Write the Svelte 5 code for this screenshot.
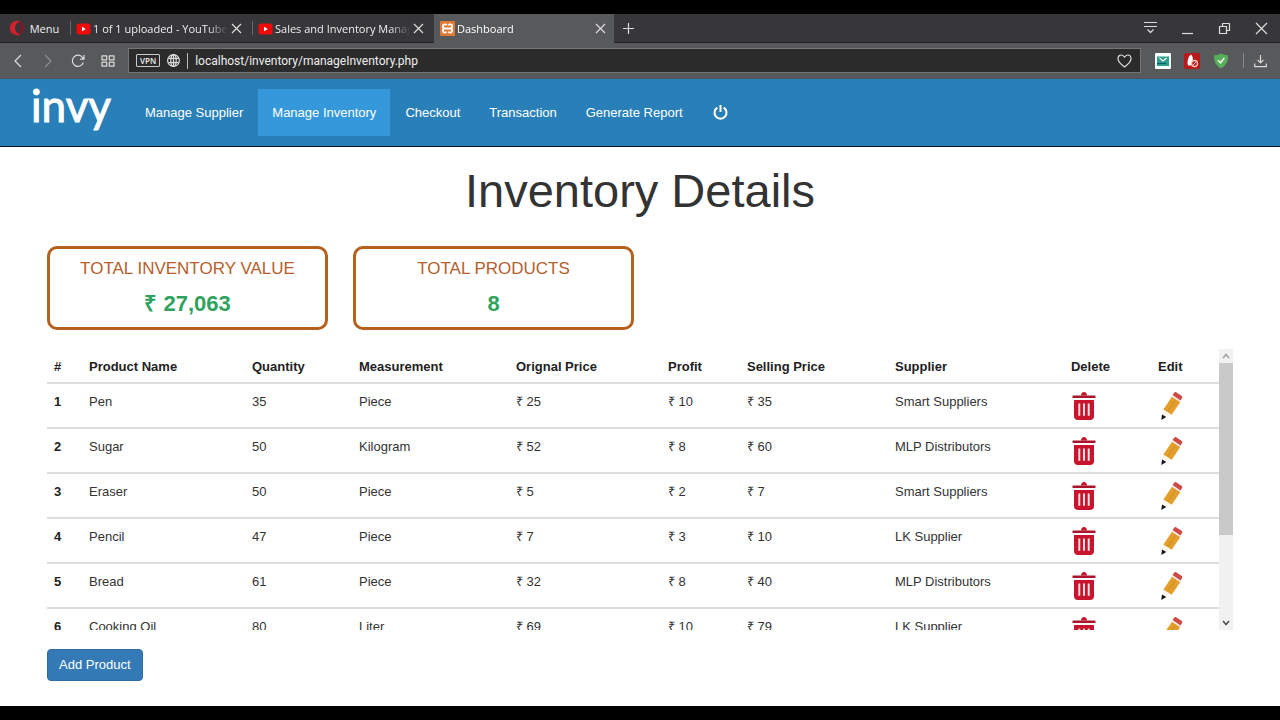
<script>
  const navLinks = ['Manage Supplier', 'Manage Inventory', 'Checkout', 'Transaction', 'Generate Report'];
  const activeLink = 'Manage Inventory';

  const tabs = [
    { title: '1 of 1 uploaded - YouTube Studio', icon: 'youtube' },
    { title: 'Sales and Inventory Management', icon: 'youtube' },
    { title: 'Dashboard', icon: 'xampp', active: true }
  ];

  const columns = [
    { label: '#', size: 35 },
    { label: 'Product Name', size: 163 },
    { label: 'Quantity', size: 107 },
    { label: 'Measurement', size: 157 },
    { label: 'Orignal Price', size: 152 },
    { label: 'Profit', size: 79 },
    { label: 'Selling Price', size: 148 },
    { label: 'Supplier', size: 176 },
    { label: 'Delete', size: 87 },
    { label: 'Edit', size: 68 }
  ];
  const totalSize = columns.reduce((sum, c) => sum + c.size, 0);

  const products = [
    ['Pen', 35, 'Piece', 25, 10, 35, 'Smart Suppliers'],
    ['Sugar', 50, 'Kilogram', 52, 8, 60, 'MLP Distributors'],
    ['Eraser', 50, 'Piece', 5, 2, 7, 'Smart Suppliers'],
    ['Pencil', 47, 'Piece', 7, 3, 10, 'LK Supplier'],
    ['Bread', 61, 'Piece', 32, 8, 40, 'MLP Distributors'],
    ['Cooking Oil', 80, 'Liter', 69, 10, 79, 'LK Supplier']
  ];

  let url = $state('localhost/inventory/manageInventory.php');
</script>

<div class="screen">
  <header class="browser">
    <div class="tabbar">
      <button class="menu">
        <svg width="16" height="16" viewBox="0 0 16 16" aria-hidden="true">
          <path fill="#d3202f" d="M8 .8A7.2 7.2 0 1 0 8 15.200c1.700 0 3.200-.6 4.400-1.500-3.400 1-6.300-1.600-6.300-5.700s2.900-6.700 6.300-5.700A7.200 7.200 0 0 0 8 .8z" />
          <path fill="#7c1a28" d="M12.400 2.300c-1.200-.5-2.300-.4-3.400.3 1.600.6 2.600 2.800 2.600 5.400s-1 4.800-2.600 5.400c1.100.7 2.200.8 3.400.3A7.200 7.200 0 0 0 12.400 2.300z" />
        </svg>
        <span>Menu</span>
      </button>
      {#each tabs as tab}
        <div class="tab" class:active={tab.active}>
          {#if tab.icon === 'youtube'}
            <svg width="15" height="12" viewBox="0 0 15 12" aria-hidden="true">
              <rect x=".5" y=".5" width="14" height="11" rx="2.500" fill="#f00a0a" />
              <path d="M6 3.700v4.600L9.800 6z" fill="#fff" />
            </svg>
          {:else}
            <svg width="15" height="15" viewBox="0 0 16 16" aria-hidden="true">
              <rect width="16" height="16" rx="1" fill="#e07a35" />
              <path d="M7 4.600C6.400 3.200 3 3.200 3 5.600 3 7.300 4.200 8 5.500 8h5C11.800 8 13 7.300 13 5.600c0-2.400-3.400-2.400-4-1M5.500 8C4.200 8 3 8.700 3 10.400c0 2.400 3.400 2.400 4 1M10.500 8c1.300 0 2.500.7 2.500 2.400 0 2.400-3.400 2.400-4 1" fill="none" stroke="#fff" stroke-width="1.900" />
            </svg>
          {/if}
          <span class="tab-title">{tab.title}</span>
          <button class="close" aria-label="Close tab">
            <svg width="11" height="11" viewBox="0 0 11 11"><path d="M1 1l9 9M10 1l-9 9" /></svg>
          </button>
        </div>
      {/each}
      <button class="new-tab" aria-label="New tab">
        <svg width="11" height="11" viewBox="0 0 11 11"><path d="M5.500 0v11M0 5.500h11" /></svg>
      </button>
      <div class="window-controls">
        <button aria-label="Tab menu">
          <svg width="15" height="14" viewBox="0 0 15 14"><path d="M1 1.500h13M1 5.500h13M4.500 8.500l3 3 3-3" /></svg>
        </button>
        <button aria-label="Minimize">
          <svg width="13" height="14" viewBox="0 0 13 14"><path d="M1 12.500h11" /></svg>
        </button>
        <button aria-label="Restore">
          <svg width="13" height="13" viewBox="0 0 13 13"><path d="M1.500 4.500h7v7h-7zM4.500 4.500v-3h7v7h-3" /></svg>
        </button>
        <button aria-label="Close window">
          <svg width="13" height="13" viewBox="0 0 13 13"><path d="M1 1l11 11M12 1L1 12" /></svg>
        </button>
      </div>
    </div>

    <div class="toolbar">
      <button class="tool" aria-label="Back">
        <svg width="14" height="14" viewBox="0 0 14 14"><path d="M10 1L4 7l6 6" /></svg>
      </button>
      <button class="tool dim" aria-label="Forward">
        <svg width="14" height="14" viewBox="0 0 14 14"><path d="M4 1l6 6-6 6" /></svg>
      </button>
      <button class="tool" aria-label="Reload">
        <svg width="14" height="14" viewBox="0 0 14 14"><path d="M12.300 8.500A5.600 5.600 0 1 1 11.500 3.500L12.800 5M13 1v4.200H9" /></svg>
      </button>
      <button class="tool" aria-label="Speed dial">
        <svg width="14" height="12" viewBox="0 0 14 12"><path d="M1 .8h4.700v4H1zM8.300.8H13v4H8.300zM1 7.200h4.700v4H1zM8.300 7.200H13v4H8.300z" /></svg>
      </button>
      <div class="address">
        <span class="vpn">VPN</span>
        <svg width="13" height="13" viewBox="0 0 13 13" aria-hidden="true"><circle cx="6.500" cy="6.500" r="5.900" /><ellipse cx="6.500" cy="6.500" rx="2.700" ry="5.900" /><path d="M1.300 4.300h10.400M1.300 8.700h10.400M6.500.6v11.800" /></svg>
        <i class="caret"></i>
        <input aria-label="Address" bind:value={url} spellcheck="false" />
        <button aria-label="Bookmark">
          <svg width="15" height="14" viewBox="0 0 15 14"><path d="M7.500 13C4 10.300 1 7.800 1 4.700 1 2.500 2.500 1 4.300 1c1.400 0 2.500.8 3.200 2.200C8.200 1.800 9.300 1 10.700 1 12.500 1 14 2.500 14 4.700c0 3.100-3 5.600-6.500 8.300z" /></svg>
        </button>
      </div>
      <div class="extensions">
        <button aria-label="Mail">
          <svg class="solid" width="16" height="16" viewBox="0 0 16 16"><rect width="16" height="16" rx="1" fill="#f4fffc" /><rect x="2" y="3.500" width="12" height="9.500" fill="#2f9e8c" /><path d="M4.500 5L8 8l3.500-3" fill="none" stroke="#fff" stroke-width="1.300" /><path d="M2 10.500h9" stroke="#0b5c66" stroke-width="1.200" /></svg>
        </button>
        <button aria-label="Blocker">
          <svg class="solid" width="16" height="16" viewBox="0 0 16 16"><rect width="16" height="16" rx="2" fill="#b81a1c" /><path d="M4 12.500C2.800 9 4 3.500 7 1.500c2.300 2 2 5 1.600 7L7 12.500z" fill="#fff" /><circle cx="10.500" cy="10.500" r="3" fill="#b81a1c" stroke="#ffc5b8" stroke-width="1.300" /><path d="M8.500 12.500l4-4" stroke="#ffc5b8" /></svg>
        </button>
        <button aria-label="Shield">
          <svg class="solid" width="16" height="16" viewBox="0 0 16 16"><path d="M8 .5c2.200 1.300 4.500 1.700 7 1.700 0 6-1.500 10.300-7 13.300C2.500 12.500 1 8.200 1 2.200c2.500 0 4.800-.4 7-1.700z" fill="#56ae5b" /><path d="M5 7.200l2.500 2.600L11.300 5" fill="none" stroke="#f2fff0" stroke-width="1.500" /></svg>
        </button>
      </div>
      <i class="divider"></i>
      <button class="download" aria-label="Downloads">
        <svg width="13" height="14" viewBox="0 0 13 14"><path d="M6.500 1v7.500M3.500 5.800l3 3 3-3M.7 9.500v3.200h11.600V9.500" /></svg>
      </button>
    </div>
  </header>

  <nav class="navbar">
    <a class="brand" href="#home">invy</a>
    {#each navLinks as link}
      <a class="link" class:active={link === activeLink} href="#{link.toLowerCase().replace(' ', '-')}">{link}</a>
    {/each}
    <a class="link power" href="#logout" aria-label="Log out">
      <svg width="17" height="17" viewBox="0 0 17 17"><path d="M5.300 3.600a6 6 0 1 0 6.400 0M8.500 1v7" /></svg>
    </a>
  </nav>

  <main>
    <h1>Inventory Details</h1>

    <section class="cards">
      <div class="card">
        <h2>TOTAL INVENTORY VALUE</h2>
        <strong>₹ 27,063</strong>
      </div>
      <div class="card">
        <h2>TOTAL PRODUCTS</h2>
        <strong>8</strong>
      </div>
    </section>

    <section class="list">
      <div class="scroll">
        <table>
          <colgroup>
            {#each columns as col}
              <col style="width: {(col.size / totalSize) * 100}%" />
            {/each}
          </colgroup>
          <thead>
            <tr>
              {#each columns as col}<th scope="col">{col.label}</th>{/each}
            </tr>
          </thead>
          <tbody>
            {#each products as [name, qty, unit, cost, profit, price, supplier], i}
              <tr>
                <th scope="row">{i + 1}</th>
                <td>{name}</td>
                <td>{qty}</td>
                <td>{unit}</td>
                <td>₹ {cost}</td>
                <td>₹ {profit}</td>
                <td>₹ {price}</td>
                <td>{supplier}</td>
                <td>
                  <button class="icon" aria-label="Delete {name}">
                    <svg width="26" height="30" viewBox="0 0 26 30">
                      <path fill="#c8142c" d="M3 9h20v16a4 4 0 0 1-4 4H7a4 4 0 0 1-4-4zM10 4.500C10 2.300 11.300 1 13 1s3 1.300 3 3.500z" />
                      <rect x="1.500" y="4.500" width="23" height="2.600" rx=".6" fill="#ab142c" />
                      <path stroke="#fbe6e8" stroke-width="1.900" d="M8.300 12.500v12.300M13 12.500v12.300M17.700 12.500v12.300" />
                    </svg>
                  </button>
                </td>
                <td>
                  <button class="icon" aria-label="Edit {name}">
                    <svg width="26" height="30" viewBox="0 0 26 30">
                      <path fill="#fdf6ea" d="M5 18.800l7.800 5.200-9 4.800z" />
                      <path fill="#e39e2b" d="M14 5.800l8.300 5.300-8.600 12.600-8.300-5.300z" />
                      <path stroke="#d99626" stroke-width="1.800" fill="none" d="M17.600 8.900L9.800 20.600" />
                      <path fill="#f8e1dc" d="M14.600 4.800l8.300 5.400-.6 1-8.300-5.400z" />
                      <path fill="#cf4a45" d="M16 1.900c.7-1 1.600-1.100 2.500-.5l5 3.400c.9.600 1 1.400.4 2.400l-1.400 2.200-8-5.300z" />
                      <path fill="#15151f" d="M4 23.400l4.300 2.600-5 3z" />
                    </svg>
                  </button>
                </td>
              </tr>
            {/each}
          </tbody>
        </table>
      </div>
      <div class="scrollbar">
        <button class="up" aria-label="Scroll up">
          <svg width="8" height="6" viewBox="0 0 8 6"><path d="M1 5l3-3.500L7 5" /></svg>
        </button>
        <div class="track"><div class="thumb"></div></div>
        <button class="down" aria-label="Scroll down">
          <svg width="8" height="6" viewBox="0 0 8 6"><path d="M1 1l3 3.500L7 1" /></svg>
        </button>
      </div>
    </section>

    <button class="add">Add Product</button>
  </main>
</div>

<style>
  :global(body) {
    background: #000;
  }

  .screen {
    box-sizing: border-box;
    height: 100vh;
    padding: 14px 0;
    display: flex;
    flex-direction: column;
    background: #000;
    font-family: "Liberation Sans", Arial, sans-serif;
    font-size: 13px;
    line-height: 19px;
    color: #333;
  }

  button {
    display: flex;
    align-items: center;
    justify-content: center;
    padding: 0;
    border: 0;
    background: none;
    color: inherit;
    font: inherit;
    cursor: pointer;
  }

  svg {
    flex: none;
    display: block;
  }

  .browser {
    font-family: "Open Sans", "Segoe UI", sans-serif;
    font-size: 11px;
    color: #eee;
  }

  .close svg,
  .new-tab svg,
  .window-controls svg,
  .tool svg,
  .address svg,
  .download svg {
    fill: none;
    stroke: #dcdcdc;
    stroke-width: 1.2;
    stroke-linejoin: round;
  }

  .tabbar {
    box-sizing: border-box;
    display: flex;
    height: 29px;
    background: #37373a;
    border-bottom: 1px solid #202022;
  }

  .menu {
    width: 68px;
    margin-right: 2px;
    gap: 5px;
  }

  .tab {
    box-sizing: border-box;
    display: flex;
    align-items: center;
    width: 182px;
    margin-bottom: -1px;
    padding: 0 9px 0 6px;
    gap: 2px;
    background: linear-gradient(#68686b, #68686b) no-repeat 0 7px / 1px 14px;
  }

  .tab.active {
    width: 180px;
    padding-right: 7px;
    background: #58595b;
    color: #fff;
  }

  .tab-title {
    flex: 1;
    overflow: hidden;
    white-space: nowrap;
    mask-image: linear-gradient(to right, #000 85%, transparent);
  }

  .close {
    width: 13px;
    height: 20px;
  }

  .new-tab {
    width: 28px;
  }

  .window-controls {
    display: flex;
    margin-left: auto;
  }

  .window-controls button {
    width: 37px;
  }

  .toolbar {
    box-sizing: border-box;
    display: flex;
    align-items: center;
    height: 36px;
    padding: 0 4px 0 3px;
    background: #58595b;
    border-bottom: 1px solid #4a5560;
  }

  .tool {
    width: 30px;
    height: 26px;
  }

  .tool.dim {
    opacity: .4;
  }

  .address {
    box-sizing: border-box;
    flex: 1;
    display: flex;
    align-items: center;
    gap: 7px;
    height: 25px;
    margin-left: 5px;
    padding: 0 8px 0 7px;
    background: #2b2b2c;
    border: 1px solid #737476;
  }

  .vpn {
    padding: 0 3px;
    border: 1px solid #ccc;
    border-radius: 1px;
    font-size: 8px;
    font-weight: 600;
    line-height: 11px;
  }

  .caret {
    width: 1px;
    height: 16px;
    background: #bbb;
  }

  input {
    flex: 1;
    min-width: 0;
    padding: 0;
    border: 0;
    outline: 0;
    background: none;
    color: #eee;
    font-family: Roboto, "Segoe UI", sans-serif;
    font-size: 12px;
  }

  .extensions {
    display: flex;
    margin-left: 7px;
  }

  .extensions button {
    width: 29px;
  }

  .divider {
    width: 1px;
    height: 15px;
    margin-left: 8px;
    background: #88898b;
  }

  .download {
    width: 32px;
  }

  .navbar {
    box-sizing: border-box;
    display: flex;
    align-items: center;
    gap: 1px;
    height: 68px;
    padding: 0 31px;
    background: #2980b9;
    border-bottom: 1px solid #08121a;
  }

  .brand {
    width: 99px;
    padding-bottom: 16px;
    color: #fff;
    font-family: Lato, sans-serif;
    font-size: 44px;
    font-weight: 400;
    line-height: 52px;
    text-decoration: none;
    -webkit-text-stroke: 1px #fff;
  }

  .link {
    padding: 14px;
    color: #fff;
    text-decoration: none;
  }

  .link.active {
    background: #3498db;
  }

  .power svg {
    fill: none;
    stroke: #fff;
    stroke-width: 2;
  }

  main {
    flex: 1;
    min-height: 0;
    display: flex;
    flex-direction: column;
    padding: 0 47px 25px;
    background: #fff;
  }

  h1 {
    margin: 18px 0 30px;
    font-size: 47px;
    font-weight: 400;
    line-height: 51px;
    text-align: center;
  }

  .cards {
    display: flex;
    gap: 25px;
  }

  .card {
    box-sizing: border-box;
    width: 281px;
    height: 84px;
    padding-top: 10px;
    border: 3px solid #b5601c;
    border-radius: 10px;
    text-align: center;
  }

  .card h2 {
    margin: 0 0 12px;
    color: #b5602c;
    font-size: 17px;
    font-weight: 400;
    line-height: 19px;
  }

  .card strong {
    display: block;
    color: #2fa35e;
    font-size: 22px;
    line-height: 28px;
  }

  .list {
    flex: 1;
    min-height: 0;
    display: flex;
    margin: 19px 0;
  }

  .scroll {
    flex: 1;
    overflow-y: auto;
    scrollbar-width: none;
  }

  table {
    width: 100%;
    table-layout: fixed;
    border-collapse: collapse;
  }

  th,
  td {
    padding: 8px 7px 6px;
    text-align: left;
    vertical-align: top;
    white-space: nowrap;
  }

  th {
    color: #222;
  }

  thead th {
    border-bottom: 2px solid #ddd;
  }

  tbody tr {
    height: 45px;
    border-bottom: 2px solid #ddd;
  }

  td:has(.icon) {
    padding: 7px 7px 0;
  }

  .scrollbar {
    display: flex;
    flex-direction: column;
    width: 14px;
    background: #f1f1f1;
  }

  .scrollbar button {
    height: 14px;
  }

  .scrollbar svg {
    fill: none;
    stroke: #505050;
    stroke-width: 1.6;
  }

  .scrollbar .up svg {
    stroke: #a3a3a3;
  }

  .track {
    flex: 1;
  }

  .thumb {
    height: 68%;
    background: #c9c9c9;
  }

  .add {
    align-self: flex-start;
    padding: 6px 11px;
    border: 1px solid #2e6da4;
    border-radius: 4px;
    background: #337ab7;
    color: #fff;
    line-height: 18px;
  }
</style>
